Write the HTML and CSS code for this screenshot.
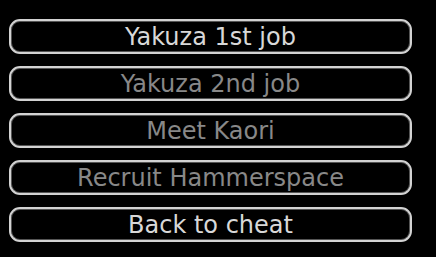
FILE: index.html
```html
<!DOCTYPE html>
<html>
<head>
<meta charset="utf-8">
<link rel="stylesheet" href="styles.css">
</head>
<body>
<div class="menu">
  <div class="btn">Yakuza 1st job</div>
  <div class="btn disabled">Yakuza 2nd job</div>
  <div class="btn disabled">Meet Kaori</div>
  <div class="btn disabled">Recruit Hammerspace</div>
  <div class="btn">Back to cheat</div>
</div>
</body>
</html>
```
FILE: styles.css
```css
html, body {
  margin: 0;
  padding: 0;
  background: #000;
  width: 436px;
  height: 257px;
  overflow: hidden;
}
.menu {
  display: flex;
  flex-direction: column;
  gap: 12px;
  padding: 19px 0 0 9px;
  width: 403px;
}
.btn {
  box-sizing: border-box;
  height: 35px;
  border: 2px solid #d2d2d2;
  border-radius: 11px;
  box-shadow: inset 0 0 0 1px #555;
  display: flex;
  align-items: center;
  justify-content: center;
  font-family: "DejaVu Sans", sans-serif;
  font-size: 24px;
  color: #d8d8d8;
}
.btn.disabled {
  color: #888888;
}
```
